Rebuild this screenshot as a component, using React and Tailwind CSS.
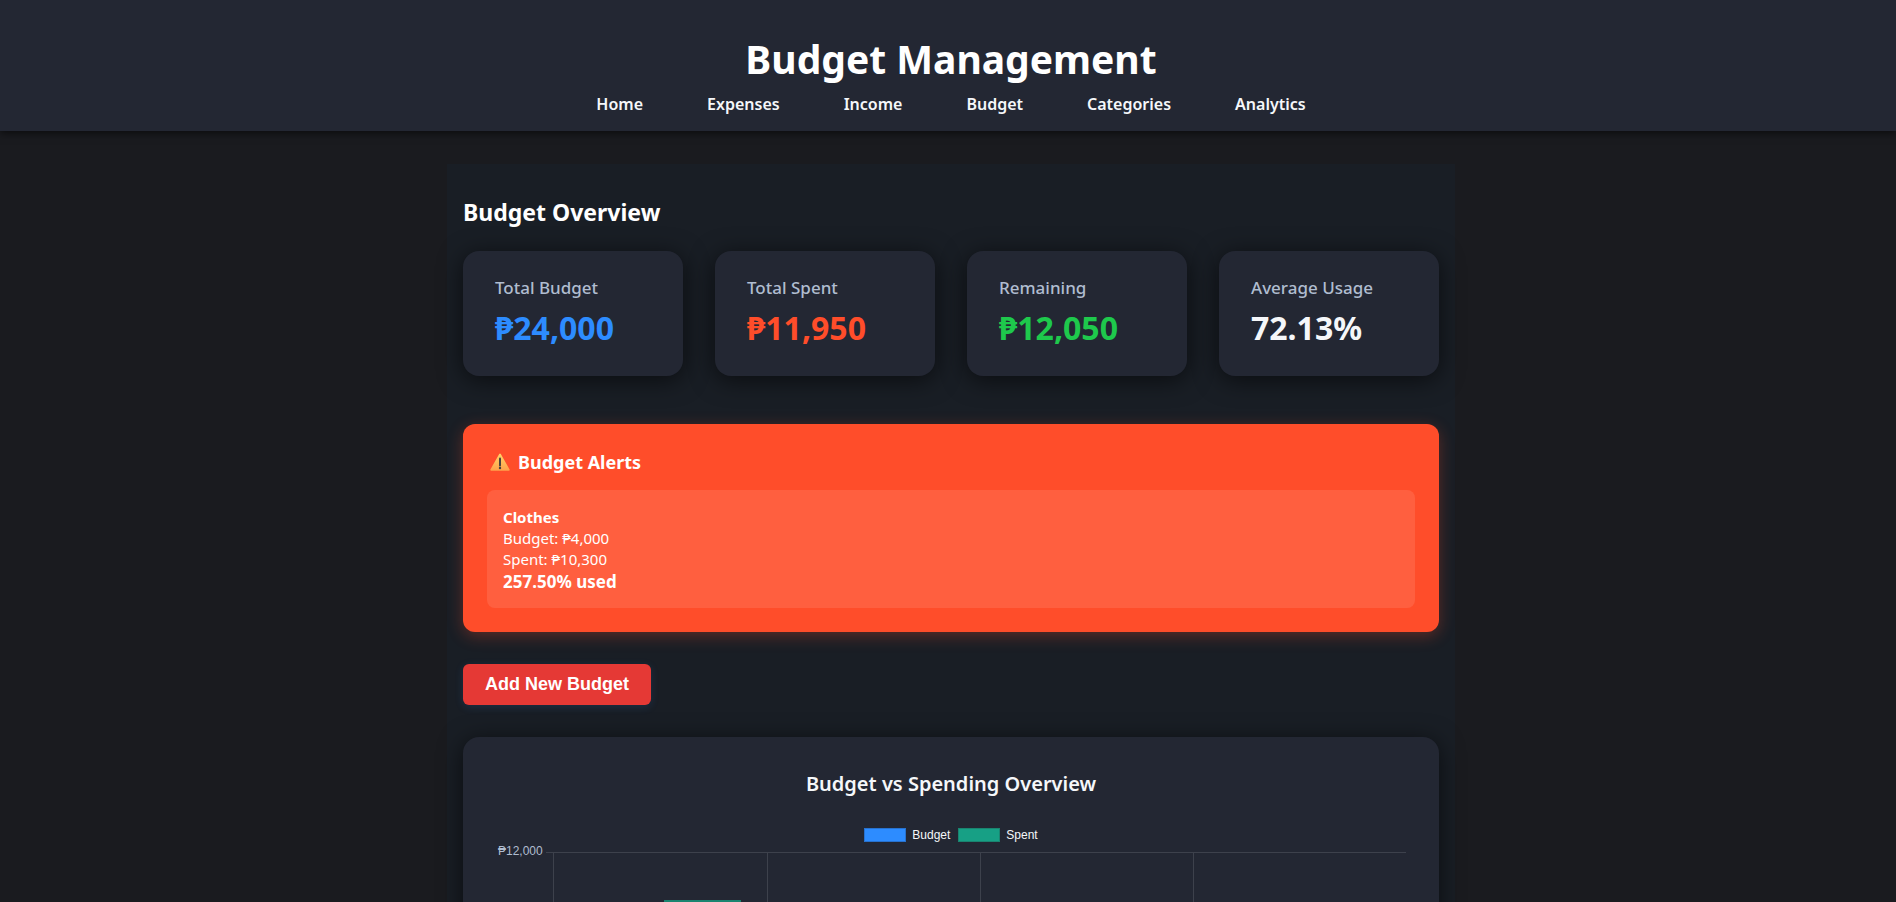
const navItems = ['Home', 'Expenses', 'Income', 'Budget', 'Categories', 'Analytics'];

const stats = [
  { label: 'Total Budget', value: '₱24,000', color: 'text-[#2d8cff]' },
  { label: 'Total Spent', value: '₱11,950', color: 'text-[#ff4d2a]' },
  { label: 'Remaining', value: '₱12,050', color: 'text-[#1ec94c]' },
  { label: 'Average Usage', value: '72.13%', color: 'text-[#f5f7fa]' },
];

function Header() {
  return (
    <header className="relative flex flex-col items-center bg-[#232733] pl-1.5 pt-[31px] pb-[9px] shadow-[0_2px_8px_rgba(0,0,0,0.6)]">
      <h1 className="text-[39px] leading-[55px] font-bold text-white">Budget Management</h1>
      <nav className="flex flex-wrap justify-center gap-x-16">
        {navItems.map((item) => (
          <a key={item} href={`#${item.toLowerCase()}`} className="text-[16px] leading-[36px] font-semibold text-[#f5f7fa]">
            {item}
          </a>
        ))}
      </nav>
    </header>
  );
}

function StatCard({ label, value, color }) {
  return (
    <div className="rounded-2xl bg-[#232733] px-8 pt-6 pb-7 shadow-[0_4px_24px_rgba(0,0,0,0.6)]">
      <h3 className="text-[17px] leading-[25px] font-medium text-[#b0bdd0]">{label}</h3>
      <p className="mt-2 text-[32px] leading-[40px] font-bold">
        <span className={color}>{value}</span>
      </p>
    </div>
  );
}

function WarningIcon() {
  return (
    <svg viewBox="0 0 20 18" className="h-[18px] w-5" aria-hidden="true">
      <defs>
        <linearGradient id="warn" x1="0" y1="0" x2="0" y2="1">
          <stop offset="0" stopColor="#ffd56a" />
          <stop offset="1" stopColor="#ffa14a" />
        </linearGradient>
      </defs>
      <path d="M9.2.9a.9.9 0 0 1 1.6 0l8.8 15.6a.8.8 0 0 1-.7 1.2H1.1a.8.8 0 0 1-.7-1.2z" fill="url(#warn)" />
      <path d="M10 5.4v7" stroke="#4a4140" strokeWidth="2" strokeLinecap="round" />
      <circle cx="10" cy="15" r="1.2" fill="#4a4140" />
    </svg>
  );
}

function Alerts() {
  return (
    <section className="mt-12 rounded-xl bg-[#ff4d2a] p-6 text-white shadow-[0_4px_16px_rgba(255,77,42,0.3)]">
      <h3 className="flex items-center gap-2 pl-[3px] text-[18px] leading-[28px] font-bold">
        <WarningIcon />
        Budget Alerts
      </h3>
      <div className="mt-3.5 rounded-lg bg-white/10 px-4 pt-[17px] pb-[15px] text-[15px] leading-[21px]">
        <p className="font-bold">Clothes</p>
        <p>Budget: ₱4,000</p>
        <p>Spent: ₱10,300</p>
        <p className="text-[17px] leading-[23px] font-bold">257.50% used</p>
      </div>
    </section>
  );
}

function Chart() {
  return (
    <section className="mt-8 rounded-2xl bg-[#232733] px-8 pt-8 pb-8 shadow-[0_4px_24px_rgba(0,0,0,0.6)]">
      <h3 className="text-center text-[20px] leading-[29px] font-semibold text-[#f5f7fa]">Budget vs Spending Overview</h3>
      <div className="mt-7 flex items-center justify-center gap-2 font-['Liberation_Sans',Arial,sans-serif] text-[12px] leading-[18px] text-[#f5f7fa]">
        <span className="flex items-center gap-1.5">
          <span className="h-3.5 w-[42px] border border-[#2872cf] bg-[#2d8cff]" />
          Budget
        </span>
        <span className="flex items-center gap-1.5">
          <span className="h-3.5 w-[42px] border border-[#1a8470] bg-[#17a085]" />
          Spent
        </span>
      </div>
      <div className="flex">
        <span className="w-[49px] pl-[3px] font-['Liberation_Sans',Arial,sans-serif] text-[12px] leading-[14px] text-[#b0bdd0]">₱12,000</span>
        <svg viewBox="0 0 863 400" className="mt-2 min-w-0 flex-1" role="img" aria-label="Budget and spent per category">
          <path d="M2 .5H862M9.500 0V400M223.500 0V400M436.500 0V400M649.500 0V400" stroke="#3d414c" fill="none" />
          <rect x="121" y="49" width="75" height="351" fill="#17a085" stroke="#1a8470" strokeWidth="2" />
        </svg>
      </div>
    </section>
  );
}

export default function App() {
  return (
    <div className="min-h-screen bg-[#1a1b1f] font-['Noto_Sans','Open_Sans',sans-serif]">
      <Header />
      <div className="pt-[33px] pl-1.5">
        <main className="mx-auto max-w-[1008px] bg-[#191e25] px-4 pt-8 pb-8">
          <h2 className="text-[23px] leading-[32px] font-bold text-white">Budget Overview</h2>
          <div className="mt-[23px] grid grid-cols-2 gap-8 lg:grid-cols-4">
            {stats.map((stat) => (
              <StatCard key={stat.label} {...stat} />
            ))}
          </div>
          <Alerts />
          <button
            type="button"
            className="mt-8 rounded-md bg-[#e53935] px-[22px] py-2 font-['Liberation_Sans',Arial,sans-serif] text-[18px] leading-[25px] font-bold text-white shadow-[0_2px_8px_rgba(45,140,255,0.15)]"
          >
            Add New Budget
          </button>
          <Chart />
        </main>
      </div>
    </div>
  );
}
